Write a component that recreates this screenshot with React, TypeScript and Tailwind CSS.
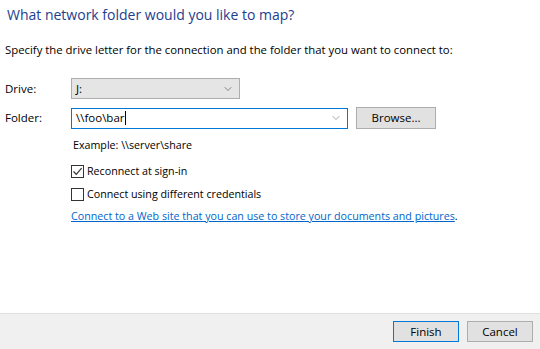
import { ChevronDown } from "lucide-react";

const font = { fontFamily: '"Open Sans", "Noto Sans", sans-serif' };

function Checkbox({ checked }: { checked?: boolean }) {
  return (
    <span className="w-[13px] h-[13px] border border-[#333333] bg-white flex items-center justify-center shrink-0">
      {checked && (
        <svg width="11" height="11" viewBox="0 0 11 11">
          <path d="M1.5 5.5 L4.3 8.3 L9.6 2.2" fill="none" stroke="#333333" strokeWidth="1.2" />
        </svg>
      )}
    </span>
  );
}

export default function App() {
  return (
    <div
      className="w-[540px] h-[349px] bg-white flex flex-col text-[11.5px] text-black overflow-hidden"
      style={font}
    >
      <div className="flex-1 pl-[5px]">
        <h1 className="pt-[5px] leading-[20px] text-[14px] text-[#1c3e8f] pl-[2px]">
          What network folder would you like to map?
        </h1>
        <p className="mt-[17px] leading-[16px] text-[11.35px]">
          Specify the drive letter for the connection and the folder that you want to connect to:
        </p>

        <div className="mt-[20px] flex flex-col gap-[8px]">
          <div className="flex items-center">
            <span className="w-[66px]">Drive:</span>
            <div className="w-[169px] h-[21px] bg-[#e5e5e5] border border-[#adadad] flex items-center justify-between pl-[4px] pr-[5px]">
              <span>J:</span>
              <ChevronDown size={12} strokeWidth={1.2} className="text-[#444]" />
            </div>
          </div>
          <div className="flex items-center">
            <span className="w-[66px]">Folder:</span>
            <div className="w-[277px] h-[21px] bg-white border border-[#0078d7] flex items-center justify-between pl-[4px] pr-[5px]">
              <span className="flex items-center">
                \\foo\bar<span className="w-px h-[14px] bg-black ml-px" />
              </span>
              <ChevronDown size={12} strokeWidth={1.2} className="text-[#666]" />
            </div>
            <button className="ml-[8px] w-[80px] h-[22px] bg-[#e1e1e1] border border-[#adadad] flex items-center justify-center">
              Browse...
            </button>
          </div>
        </div>

        <div className="pl-[66px] text-[10.7px]">
          <p className="mt-[8px] leading-[16px] pl-[2px]">Example: \\server\share</p>
          <label className="mt-[10px] flex items-center gap-[3px] h-[16px]">
            <Checkbox checked />
            <span>Reconnect at sign-in</span>
          </label>
          <label className="mt-[7px] flex items-center gap-[3px] h-[16px]">
            <Checkbox />
            <span>Connect using different credentials</span>
          </label>
          <p className="mt-[6px] leading-[16px]">
            <a className="text-[#0066cc] underline">
              Connect to a Web site that you can use to store your documents and pictures
            </a>
            .
          </p>
        </div>
      </div>

      <div className="h-[36px] border-t border-[#dfdfdf] bg-[#f0f0f0] flex items-center justify-end gap-[8px] pr-[7px]">
        <button className="w-[66px] h-[21px] bg-[#e1e1e1] border border-[#0078d7] flex items-center justify-center">
          Finish
        </button>
        <button className="w-[66px] h-[21px] bg-[#e1e1e1] border border-[#adadad] flex items-center justify-center">
          Cancel
        </button>
      </div>
    </div>
  );
}
